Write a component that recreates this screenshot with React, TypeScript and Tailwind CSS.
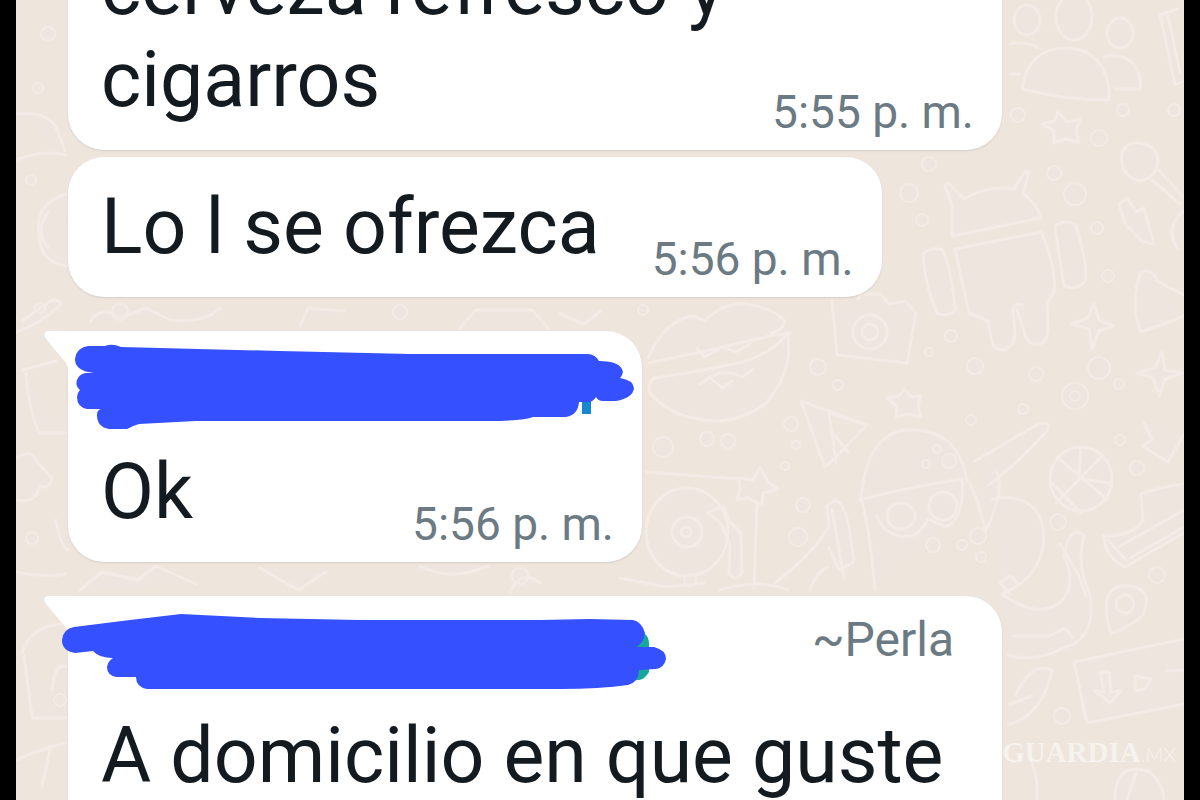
import type { ReactNode } from "react";

const specks = [
  [929, 164, 7], [909, 193, 9], [922, 220, 6], [1018, 115, 7], [1099, 138, 8], [1123, 110, 6],
  [1054, 173, 7], [1075, 194, 11], [1097, 228, 6], [1108, 276, 6], [1174, 110, 6], [951, 336, 6],
  [929, 352, 4], [975, 366, 8], [1036, 374, 7], [1099, 368, 11], [1119, 384, 5], [1075, 396, 13],
  [1075, 396, 5], [818, 367, 8], [838, 385, 5], [791, 424, 7], [796, 445, 4], [707, 439, 7],
  [728, 441, 7], [785, 466, 4], [803, 505, 7], [798, 537, 9], [971, 420, 5], [1023, 409, 5],
  [1120, 440, 5], [1137, 468, 7], [949, 461, 7], [926, 464, 4], [937, 449, 4], [1058, 522, 8],
  [978, 536, 8], [962, 545, 5], [933, 545, 7], [981, 557, 5], [1157, 575, 8], [1062, 716, 8],
  [48, 34, 7], [38, 88, 5], [31, 180, 5], [40, 308, 5], [32, 538, 6], [643, 310, 5],
  [120, 312, 8], [400, 312, 7], [520, 576, 8], [690, 580, 6], [60, 700, 6], [663, 447, 10],
];

const doodles = [
  // people
  "M1014 20a13 15 0 1 0 26 0a13 15 0 1 0-26 0M1056 17a18 23 0 1 0 36 0a18 23 0 1 0-36 0M1107 33a13 15 0 1 0 26 0a13 15 0 1 0-26 0",
  "M1022 89c4-28 20-42 46-41c26 1 42 20 41 52q-44 0-87-11ZM1104 57c22-6 39 9 36 32h-25M1010 44q18-3 28 4M1010 74h10",
  "M1160 15l18-6M1160 15l15 70l9-4M1168 16l12 56",
  "M1058 112l9 10l13-3l-4 12l3 11l-14-3l-11 4l0-12l-12-7l12-3Z",
  // android
  "M952 236v-30l-7-20q2-6 7 1l12 12q24-14 50-10l10-16q5-4 4 3l-5 18q13 8 18 24Z",
  "M955 249l86-17q13 26 14 58l-8 14l1 25q-1 16-12 15q-10 0-12-14l-7-20M955 249l14 64l19 8l4 22q4 9 14 6q9-4 9-16l-2-23q2-8 9-5",
  "M923 254q8-8 20-4q10 28 12 60q-8 8-18 3q-12-26-14-59ZM1055 226q9-7 20-2q11 30 11 55q-7 13-22 7q-5-30-9-60Z",
  // lollipop and blobs
  "M1122 153q6-14 21-9q18 4 14 23q-5 13-18 14q-20-6-17-28ZM1159 170l25 28M1152 180l28 24M1119 204l8-6l9 14l8-4l10 36l-11-2l-18-18ZM1184 211q-20 15-7 37",
  "M1141 272q12-4 16 9l27 14M1141 272q-12 32 0 60l28-10l15-6",
  "M1094 303l5 17l15 6l-15 5l-7 18l-3-20l-18-5l17-6ZM1162 351l3 19l17 3l-17 6l-6 17l-6-18l-16-5l18-5Z",
  // camera
  "M832 300l5 55l70 8l9-50l-11-12l-16 3l-8-10h-20l-3 5M853 332a17 17 0 1 0 34 0a17 17 0 1 0-34 0M862 332a8 8 0 1 0 16 0a8 8 0 1 0-16 0",
  // taco
  "M648 358q17-39 46-42l11 5q18-19 42-17q25 4 37 16q2 9-13 13M648 363l48-10l74-17l20-3M654 378l39-6l50-10q35-12 44-29q8 37-22 71q-33 24-72 14q-27-6-43-25q-3-9 4-15M697 348l7 9l18-10l14 5l14-8M704 382q18-16 38-5l12-8M700 384l10-7l12 11l10-7",
  // paper plane
  "M801 401l66 24l-35 36l-7 6ZM867 425l-38-12l7 50M832 432l16 20",
  "M904 389l8 8l9-1l-3 9l3 12l-13-3l-12 3l1-11l-10-8l12-2Z",
  // turntable
  "M647 472l92 7M757 502l-3 86M646 532a41 44 0 1 0 82 0a41 44 0 1 0-82 0M672 532a15 15 0 1 0 30 0a15 15 0 1 0-30 0M681 532a5 5 0 1 0 10 0a5 5 0 1 0-10 0M707 513l17-7l5 15l12 12l1 40q-7 10-13 0l1-29l-10-22Z",
  "M739 478l14 2l7-13l8 15l10 7l-15 4l-1 12l-14-7l-11 2l3-11Z",
  "M775 583q40-31 54-57l-2-20q14-16 22 20l5 36l-15 8l-10-22M810 590q6-18 18-23M832 510l12 68",
  // astronaut
  "M875 590q-5-60-14-92q7-72 55-68q42 2 50 47q13 20 19 55q20-40 12-61M860 500q34-10 102-21q3 40-16 48l-18-8q-10 21-28 17q-17-3-23-20M887 516a14 13 0 1 0 28 0a14 13 0 1 0-28 0M929 506a14 14 0 1 0 28 0a14 14 0 1 0-28 0",
  "M975 461l65-38q12-1 7 8l-27 28l-31 26",
  "M992 499q50-8 52 39q-2 39-42 56q40 29 62 4q12-18 0-42q6-34 20-20q-8 28 6 59q7 44-27 53q-28 15-55 7M1010 594l-10-11l10-8l9 10M1060 544l18 30l8 22M1013 636h36l16-8l8 10",
  // ball
  "M1050 479a31 32 0 1 0 62 0a31 32 0 1 0-62 0M1057 457l50 42M1103 455l-47 48M1081 447l-2 31l31 5M1052 483l29 30",
  "M1144 423l8 17l-10 6l26 16l16-28M1184 484q-20 2-43 10l2 26q-8 16-40 16q3 22 22 31l59-34M1120 546l64-36M1130 558l54-31M1108 540l18 20",
  "M1111 634q-14-48 14-48q30 0 18 29q-10 10-32 19ZM1116 604a9 9 0 1 0 18 0a9 9 0 1 0-18 0",
  "M1184 639l-110 23l13 61l97-19M1074 662l12 58M1100 672l4 20l-9-1l15 12l11-12l-10 1l-2-20ZM1135 676l16 3l-6 10l-10 2ZM1166 671l18-1",
  "M1008 725q35-10 44-55q-20-9-36 24M1010 704l22-8M1030 760q9 16 7 40M1115 800q0-40 35-28q14 13 14 28M1136 773l-9 27",
  // left edge
  "M16 114q35-4 42 18l7 19M16 160q25-11 50-5M66 194q-32 10-27 40q0 28 28 32M48 212q-14 19 0 36",
  "M16 332q28-10 45-28q-5-8-15 0l-24 17M22 370l34-9M26 374q3 40 14 59h28M16 458q17-10 21 4l15 16q-3 12-12 8q-4 18-24 14M56 520q4 26 12 30M16 572q32 6 50 2M22 653q8-27 40-29M24 656l8 62h35M52 690q2-27 15-24M16 760q28-12 52-18M50 750l-8 36",
  "M90 322q12-18 30-4l26-10l24 12q34 4 50-12M460 328l16-18h56l16 18M560 314l24 10l18-14M300 326l8-18l36 3",
  "M80 590l22-18l36 8l18-14l40 18M260 568l38 22l28-18M420 566q30 16 68 0M510 592q12-24 30-9M620 578l46 9l38-4M720 590q40-12 68 0",
];

function Wallpaper() {
  return (
    <svg
      className="absolute inset-0 h-full w-full"
      viewBox="16 0 1168 800"
      preserveAspectRatio="xMaxYMin slice"
      fill="#efe4e0"
      fillOpacity={0.3}
      stroke="#f4ebe6"
      strokeWidth={3}
      strokeLinecap="round"
      strokeLinejoin="round"
      aria-hidden="true"
    >
      {doodles.map((d) => (
        <path key={d} d={d} />
      ))}
      {specks.map(([cx, cy, r], i) => (
        <circle key={i} cx={cx} cy={cy} r={r} strokeWidth={2} />
      ))}
    </svg>
  );
}

function Tail() {
  return (
    <svg className="absolute top-0 -left-6 h-10 w-14" viewBox="0 0 56 40" fill="#ffffff" aria-hidden="true">
      <path d="M56 0H4Q-1 1 1 6Q4 11 19 28Q24 33 24 40H56Z" />
    </svg>
  );
}

function Bubble({ className, tail, children }: { className: string; tail?: boolean; children: ReactNode }) {
  return (
    <article className={`relative bg-white shadow-[0_1px_2px_#d5cdc8] pt-6 pb-6 pl-[33px] pr-7 ${className}`}>
      {tail && <Tail />}
      {children}
    </article>
  );
}

function Time({ children }: { children: ReactNode }) {
  return (
    <time className="-mb-3.5 shrink-0 whitespace-nowrap text-[46px] leading-[56px] text-[#6b7a83]">{children}</time>
  );
}

export default function App() {
  return (
    <div className="h-screen overflow-hidden bg-black px-4 font-[Roboto,sans-serif] text-[#141b20]">
      <main className="relative h-full overflow-hidden bg-[#eee5dd]">
        <Wallpaper />

        <section className="relative -mt-[82px] flex flex-col items-start pl-[52px] text-[77px] leading-[92px]">
          <Bubble className="w-[934px] max-w-full rounded-[36px] flex items-end justify-between">
            <p>
              cerveza refresco y<br />
              cigarros
            </p>
            <Time>5:55 p. m.</Time>
          </Bubble>

          <Bubble className="mt-[7px] rounded-[36px] flex items-end gap-[52px]">
            <p>Lo l se ofrezca</p>
            <Time>5:56 p. m.</Time>
          </Bubble>

          <Bubble tail className="mt-[34px] w-[574px] rounded-[36px] rounded-tl-none">
            <svg className="absolute top-3 left-0 h-24 w-[574px]" viewBox="68 343 574 96" aria-hidden="true">
              <path d="M582 396h9v18h-9Z" fill="#1688cf" />
              <path
                fill="#3450ff"
                d="M88 346H105Q112 343 121 347L280 351L410 354H588Q596 355 599 361Q621 361 623 372Q622 376 620 378Q633 380 634 388Q633 398 616 401H603Q598 401 596 397Q593 402 588 402H579Q578 415 566 417H533Q525 420 500 421H196L139 424Q132 426 127 429H109Q97 427 97 415Q97 410 101 409H87Q77 407 77 397Q77 393 80 390Q75 386 77 380Q79 374 86 373H94L88 372Q75 369 75 359Q76 348 88 346Z"
              />
            </svg>
            <div className="h-[91px]" />
            <div className="flex items-end justify-between">
              <p>Ok</p>
              <Time>5:56 p. m.</Time>
            </div>
          </Bubble>

          <Bubble tail className="mt-[34px] w-[934px] max-w-full rounded-tr-[36px]">
            <svg className="absolute top-3 -left-2 h-24 w-[616px]" viewBox="60 608 616 96" aria-hidden="true">
              <path d="M636 634h9q4 3 4 10v28q-4 7-10 8h-7Z" fill="#16a99b" />
              <path
                fill="#3450ff"
                d="M74 627L130 620L181 614L260 618L360 620H540L590 619L633 620Q642 622 645 633Q644 643 636 647H654Q666 650 666 659Q664 668 656 669L639 670Q639 682 628 685Q600 689 560 689H147Q136 687 136 677H116Q107 675 107 667Q108 661 113 658Q99 658 93 651L75 653Q62 651 62 640Q63 629 74 627Z"
              />
            </svg>
            <div className="flex h-[90px] justify-end pr-5">
              <span className="text-[48px] leading-10 text-[#6b7a83]">~Perla</span>
            </div>
            <p className="whitespace-nowrap">A domicilio en que guste</p>
          </Bubble>
        </section>

        <div className="absolute right-2 bottom-8 flex items-baseline font-['Liberation_Serif',serif] text-[29px] leading-7 text-white/50">
          <strong>VANGUARDIA</strong>
          <span className="font-[Lato,sans-serif] text-xl font-light">.MX</span>
        </div>
      </main>
    </div>
  );
}
